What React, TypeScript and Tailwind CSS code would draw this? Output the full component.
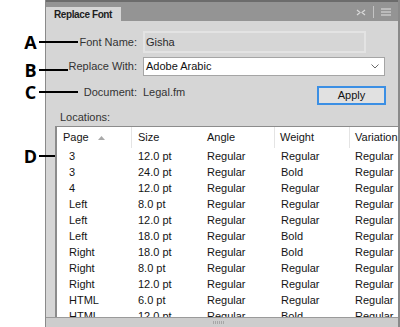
import React from "react";

type Row = {
  page: string;
  size: string;
  angle: string;
  weight: string;
  variation: string;
};

const rows: Row[] = [
  { page: "3", size: "12.0 pt", angle: "Regular", weight: "Regular", variation: "Regular" },
  { page: "3", size: "24.0 pt", angle: "Regular", weight: "Bold", variation: "Regular" },
  { page: "4", size: "12.0 pt", angle: "Regular", weight: "Regular", variation: "Regular" },
  { page: "Left", size: "8.0 pt", angle: "Regular", weight: "Regular", variation: "Regular" },
  { page: "Left", size: "12.0 pt", angle: "Regular", weight: "Regular", variation: "Regular" },
  { page: "Left", size: "18.0 pt", angle: "Regular", weight: "Bold", variation: "Regular" },
  { page: "Right", size: "18.0 pt", angle: "Regular", weight: "Bold", variation: "Regular" },
  { page: "Right", size: "8.0 pt", angle: "Regular", weight: "Regular", variation: "Regular" },
  { page: "Right", size: "12.0 pt", angle: "Regular", weight: "Regular", variation: "Regular" },
  { page: "HTML", size: "6.0 pt", angle: "Regular", weight: "Regular", variation: "Regular" },
  { page: "HTML", size: "12.0 pt", angle: "Regular", weight: "Bold", variation: "Regular" },
];

// callout letters on the left, lines run into the panel
const callouts = [
  { letter: "A", top: "top-[34px]", line: "w-[39px]" },
  { letter: "B", top: "top-[62px]", line: "w-[29px]" },
  { letter: "C", top: "top-[84px]", line: "w-[39px]" },
  { letter: "D", top: "top-[148px]", line: "w-[16px]" },
];

function Header() {
  return (
    <div className="flex h-[21px] bg-[#949494] border-t-2 border-[#6c6c6c]">
      <div className="mt-[5px] flex h-[14px] w-[75px] items-center bg-[#d6d6d6] pl-[8px] text-[10px] font-bold tracking-[-0.4px] text-[#1e1e1e]">
        Replace Font
      </div>
      <div className="ml-auto flex items-center gap-[7px] pr-[7px] pt-[1px]">
        <svg width="10" height="7" viewBox="0 0 10 7" fill="none" stroke="#dadada" strokeWidth="1.2">
          <path d="M1 1 L4 3.5 L1 6 M9 1 L6 3.5 L9 6" />
        </svg>
        <div className="h-[12px] w-px bg-[#c4c4c4]" />
        <svg width="10" height="8" viewBox="0 0 10 8" fill="none" stroke="#e2e2e2" strokeWidth="1.2">
          <path d="M0 1 H10 M0 4 H10 M0 7 H10" />
        </svg>
      </div>
    </div>
  );
}

function FieldRows() {
  return (
    <div className="flex flex-col text-[11px] text-[#333]">
      <div className="mt-[10px] flex h-[22px] items-center">
        <span className="w-[91px] text-right">Font Name:</span>
        <div className="ml-[6px] flex h-[22px] w-[223px] items-center border-2 border-[#e3e3e3] bg-[#d6d6d6] pl-[1px] text-[#2a2a2a]">
          Gisha
        </div>
      </div>
      <div className="mt-[4px] flex h-[19px] items-center">
        <span className="w-[91px] text-right">Replace With:</span>
        <div className="ml-[6px] flex h-[19px] w-[242px] items-center border border-[#a5a5a5] bg-white pl-[2px] pr-[5px] text-[#111]">
          Adobe Arabic
          <svg className="ml-auto" width="8" height="5" viewBox="0 0 8 5" fill="none" stroke="#6a6a6a" strokeWidth="1">
            <path d="M0.5 0.5 L4 4 L7.5 0.5" />
          </svg>
        </div>
      </div>
      <div className="mt-[9px] flex items-start">
        <span className="w-[91px] text-right leading-[14px]">Document:</span>
        <span className="ml-[6px] leading-[14px]">Legal.fm</span>
        <button className="ml-auto mr-[12px] mt-[1px] flex h-[19px] w-[69px] items-center justify-center border-2 border-[#3b8fe4] bg-[#e1e1e1] text-[11px] text-[#111]">
          Apply
        </button>
      </div>
      <div className="mt-[5px] pl-[14px] leading-[14px]">Locations:</div>
    </div>
  );
}

function LocationsTable() {
  return (
    <div className="ml-[9px] mt-[2px] flex min-h-0 flex-1 flex-col overflow-hidden border-l-2 border-t border-[#8c8c8c] bg-white text-[11px] text-[#141414]">
      <div className="flex h-[21px] shrink-0 items-center">
        <div className="flex h-full w-[75px] items-center border-r border-[#e4e4e4] pl-[6px]">
          Page
          <svg className="ml-[9px]" width="7" height="4" viewBox="0 0 7 4" fill="#a9a9a9">
            <path d="M0 4 L3.5 0 L7 4 Z" />
          </svg>
        </div>
        <div className="flex h-full w-[69px] items-center pl-[6px]">Size</div>
        <div className="flex h-full w-[74px] items-center border-r border-[#e4e4e4] pl-[6px]">Angle</div>
        <div className="flex h-full w-[75px] items-center border-r border-[#e4e4e4] pl-[5px]">Weight</div>
        <div className="flex h-full flex-1 items-center pl-[5px]">Variation</div>
      </div>
      {rows.map((r, i) => (
        <div key={i} className="flex h-[16px] shrink-0 items-center leading-[16px]">
          <div className="w-[75px] pl-[12px]">{r.page}</div>
          <div className="w-[69px] pl-[6px]">{r.size}</div>
          <div className="w-[74px] pl-[6px]">{r.angle}</div>
          <div className="w-[75px] pl-[6px]">{r.weight}</div>
          <div className="flex-1 pl-[5px]">{r.variation}</div>
        </div>
      ))}
    </div>
  );
}

export default function App() {
  return (
    <div
      className="relative flex h-[327px] w-[400px] overflow-hidden bg-white pl-[45px]"
      style={{ fontFamily: '"Liberation Sans", Arial, sans-serif' }}
    >
      <div className="flex h-full flex-1 flex-col border-l border-r-2 border-[#8a8a8a] bg-[#d6d6d6]">
        <Header />
        <div className="flex min-h-0 flex-1 flex-col">
          <FieldRows />
          <LocationsTable />
        </div>
        <div className="flex h-[10px] shrink-0 items-center border-t border-[#9a9a9a] bg-[#cdcdcd] pl-[167px]">
          <div className="flex gap-px">
            <div className="h-[3px] w-px bg-[#a6a6a6]" />
            <div className="h-[3px] w-px bg-[#a6a6a6]" />
            <div className="h-[3px] w-px bg-[#a6a6a6]" />
            <div className="h-[3px] w-px bg-[#a6a6a6]" />
            <div className="h-[3px] w-px bg-[#a6a6a6]" />
            <div className="h-[3px] w-px bg-[#a6a6a6]" />
          </div>
        </div>
      </div>

      {callouts.map((c) => (
        <div key={c.letter} className={`absolute left-[22px] flex h-[16px] items-center ${c.top}`}>
          <span
            className="w-[17px] text-center text-[18px] font-bold leading-[16px] text-black"
            style={{ fontFamily: '"Open Sans", "Liberation Sans", sans-serif' }}
          >
            {c.letter}
          </span>
          <div className={`h-[2px] bg-black ${c.line}`} />
        </div>
      ))}
    </div>
  );
}
